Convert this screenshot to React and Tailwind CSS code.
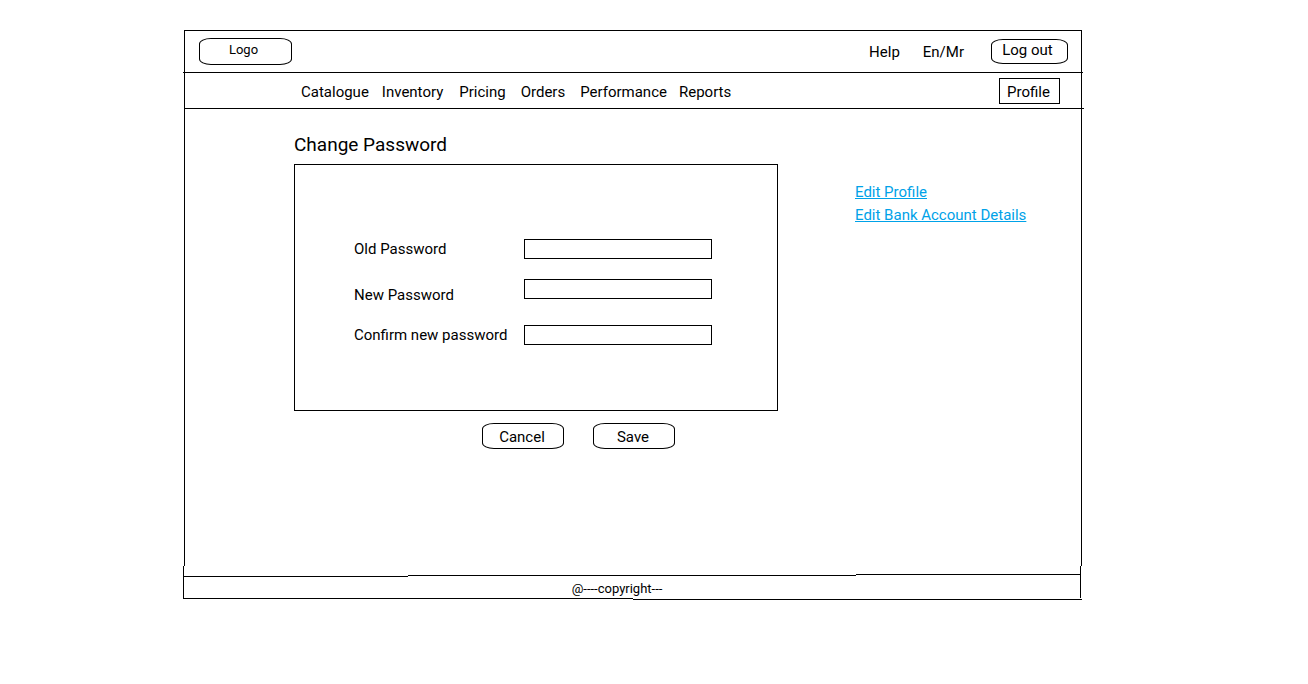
const roundedBox =
  "flex shrink-0 items-center justify-center rounded-[12px/6px] border border-black bg-white";

function Field({ id, label, className }) {
  return (
    <div className={"flex justify-between " + className}>
      <label htmlFor={id} className="self-end leading-5">
        {label}
      </label>
      <input
        id={id}
        type="password"
        className="h-5 w-[188px] self-start border border-black bg-white px-1 outline-none"
      />
    </div>
  );
}

export default function App() {
  return (
    <div className="min-h-screen bg-white pt-[30px] pr-[226px] pb-8 pl-[183px] font-[Roboto,sans-serif] text-[15px] leading-5 text-black">
      <div className="ml-px border-x border-t border-black">
        <header className="flex h-[41px] items-center justify-between pr-[13px] pl-[14px]">
          <div className={roundedBox + " h-[27px] w-[93px] pr-1 pb-1 text-[13px]"}>Logo</div>
          <div className="flex items-center">
            <a href="#help" className="mr-[23px]">
              Help
            </a>
            <a href="#language" className="mr-[27px]">
              En/Mr
            </a>
            <button type="button" className={roundedBox + " h-[25px] w-[77px] pr-1 pb-1"}>
              Log out
            </button>
          </div>
        </header>
        <hr className="-mx-[2px] border-black" />
        <nav className="flex h-[35px] items-center justify-between pr-[21px] pl-[116px]">
          <div className="flex pt-0.5">
            <a href="#catalogue">Catalogue</a>
            <a href="#inventory" className="ml-[13px]">Inventory</a>
            <a href="#pricing" className="ml-4">Pricing</a>
            <a href="#orders" className="ml-[15px]">Orders</a>
            <a href="#performance" className="ml-[15px]">Performance</a>
            <a href="#reports" className="ml-3">Reports</a>
          </div>
          <a
            href="#profile"
            className="flex h-[26px] w-[61px] items-center justify-center border border-black pt-0.5 pr-0.5"
          >
            Profile
          </a>
        </nav>
        <hr className="-mr-[3px] border-black" />
        <main className="flex min-h-[457px] items-start pt-6 pl-[109px]">
          <form className="w-[484px] shrink-0">
            <h1 className="text-[19px] leading-6">Change Password</h1>
            <div className="mt-[7px] flex flex-col gap-5 border border-black pt-[74px] pr-[65px] pb-[65px] pl-[59px]">
              <Field id="old" label="Old Password" className="h-5" />
              <Field id="new" label="New Password" className="h-[26px]" />
              <Field id="confirm" label="Confirm new password" className="h-5" />
            </div>
            <div className="mt-3 flex gap-[29px] pl-[188px]">
              <button type="button" className={roundedBox + " h-[26px] w-[82px] pt-0.5 pr-0.5"}>
                Cancel
              </button>
              <button type="submit" className={roundedBox + " h-[26px] w-[82px] pt-0.5 pr-0.5"}>
                Save
              </button>
            </div>
          </form>
          <div className="ml-[77px] flex flex-col pt-12 leading-[23px] text-[#00a2e8]">
            <a href="#edit-profile" className="underline">
              Edit Profile
            </a>
            <a href="#edit-bank" className="underline">
              Edit Bank Account Details
            </a>
          </div>
        </main>
      </div>
      <footer>
        <div className="mr-px border-x border-black pt-2">
          <div className="flex h-[3px]">
            <div className="h-px w-1/4 self-end bg-black" />
            <div className="h-px w-1/2 self-center bg-black" />
            <div className="h-px w-1/4 self-start bg-black" />
          </div>
          <p className="h-[21px] pr-[30px] text-center text-[13px] leading-6">@----copyright---</p>
        </div>
        <div className="flex h-[2px]">
          <div className="h-px w-1/2 self-start bg-black" />
          <div className="h-px w-1/2 self-end bg-black" />
        </div>
      </footer>
    </div>
  );
}
